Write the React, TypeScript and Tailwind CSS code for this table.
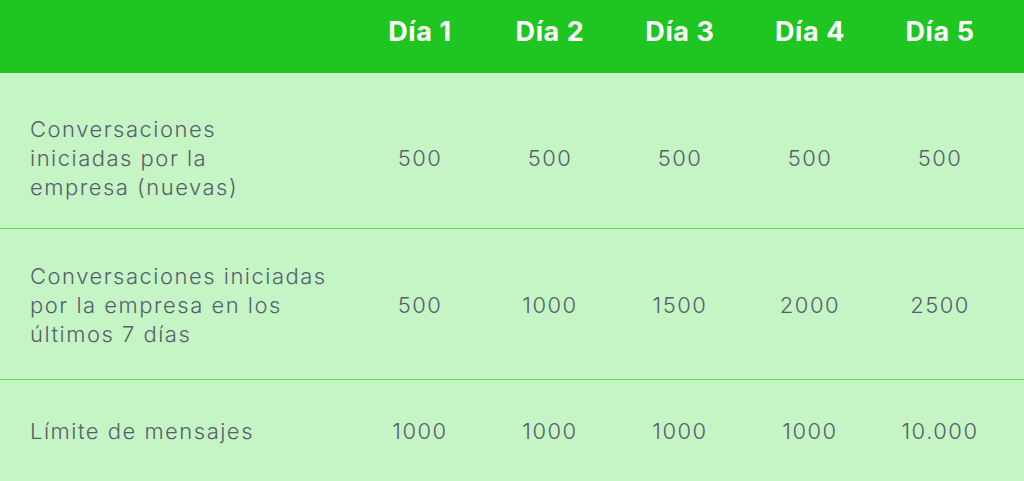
const days = ["Día 1", "Día 2", "Día 3", "Día 4", "Día 5"];

const rows = [
  {
    label: ["Conversaciones", "iniciadas por la", "empresa (nuevas)"],
    values: ["500", "500", "500", "500", "500"],
    h: "h-[156px] pt-[16px]",
  },
  {
    label: ["Conversaciones iniciadas", "por la empresa en los", "últimos 7 días"],
    values: ["500", "1000", "1500", "2000", "2500"],
    h: "h-[151px] pt-[2px]",
  },
  {
    label: ["Límite de mensajes"],
    values: ["1000", "1000", "1000", "1000", "10.000"],
    h: "h-[101px] pt-[2px]",
  },
];

export default function App() {
  return (
    <div
      className="w-[1024px] h-[481px] overflow-hidden bg-[#c5f5c5] text-[#56606c]"
      style={{ fontFamily: "Inter, 'Open Sans', sans-serif" }}
    >
      <div className="flex h-[73px] bg-[#1fc520] pt-[14px]">
        <div className="w-[355px] shrink-0" />
        {days.map((d) => (
          <div
            key={d}
            className="w-[130px] shrink-0 text-center text-[27px] leading-[36px] font-bold tracking-[0.6px] text-white"
          >
            {d}
          </div>
        ))}
      </div>
      {rows.map((r, i) => (
        <div
          key={i}
          className={`flex items-center ${r.h} ${i < rows.length - 1 ? "border-b border-[#5cd85c]" : ""}`}
        >
          <div className="w-[355px] shrink-0 pl-[30px] text-[22px] font-light leading-[29px] tracking-[1.5px]">
            {r.label.map((l) => (
              <div key={l}>{l}</div>
            ))}
          </div>
          {r.values.map((v, j) => (
            <div
              key={j}
              className="w-[130px] shrink-0 text-center text-[22px] font-light tracking-[1.5px]"
            >
              {v}
            </div>
          ))}
        </div>
      ))}
    </div>
  );
}
